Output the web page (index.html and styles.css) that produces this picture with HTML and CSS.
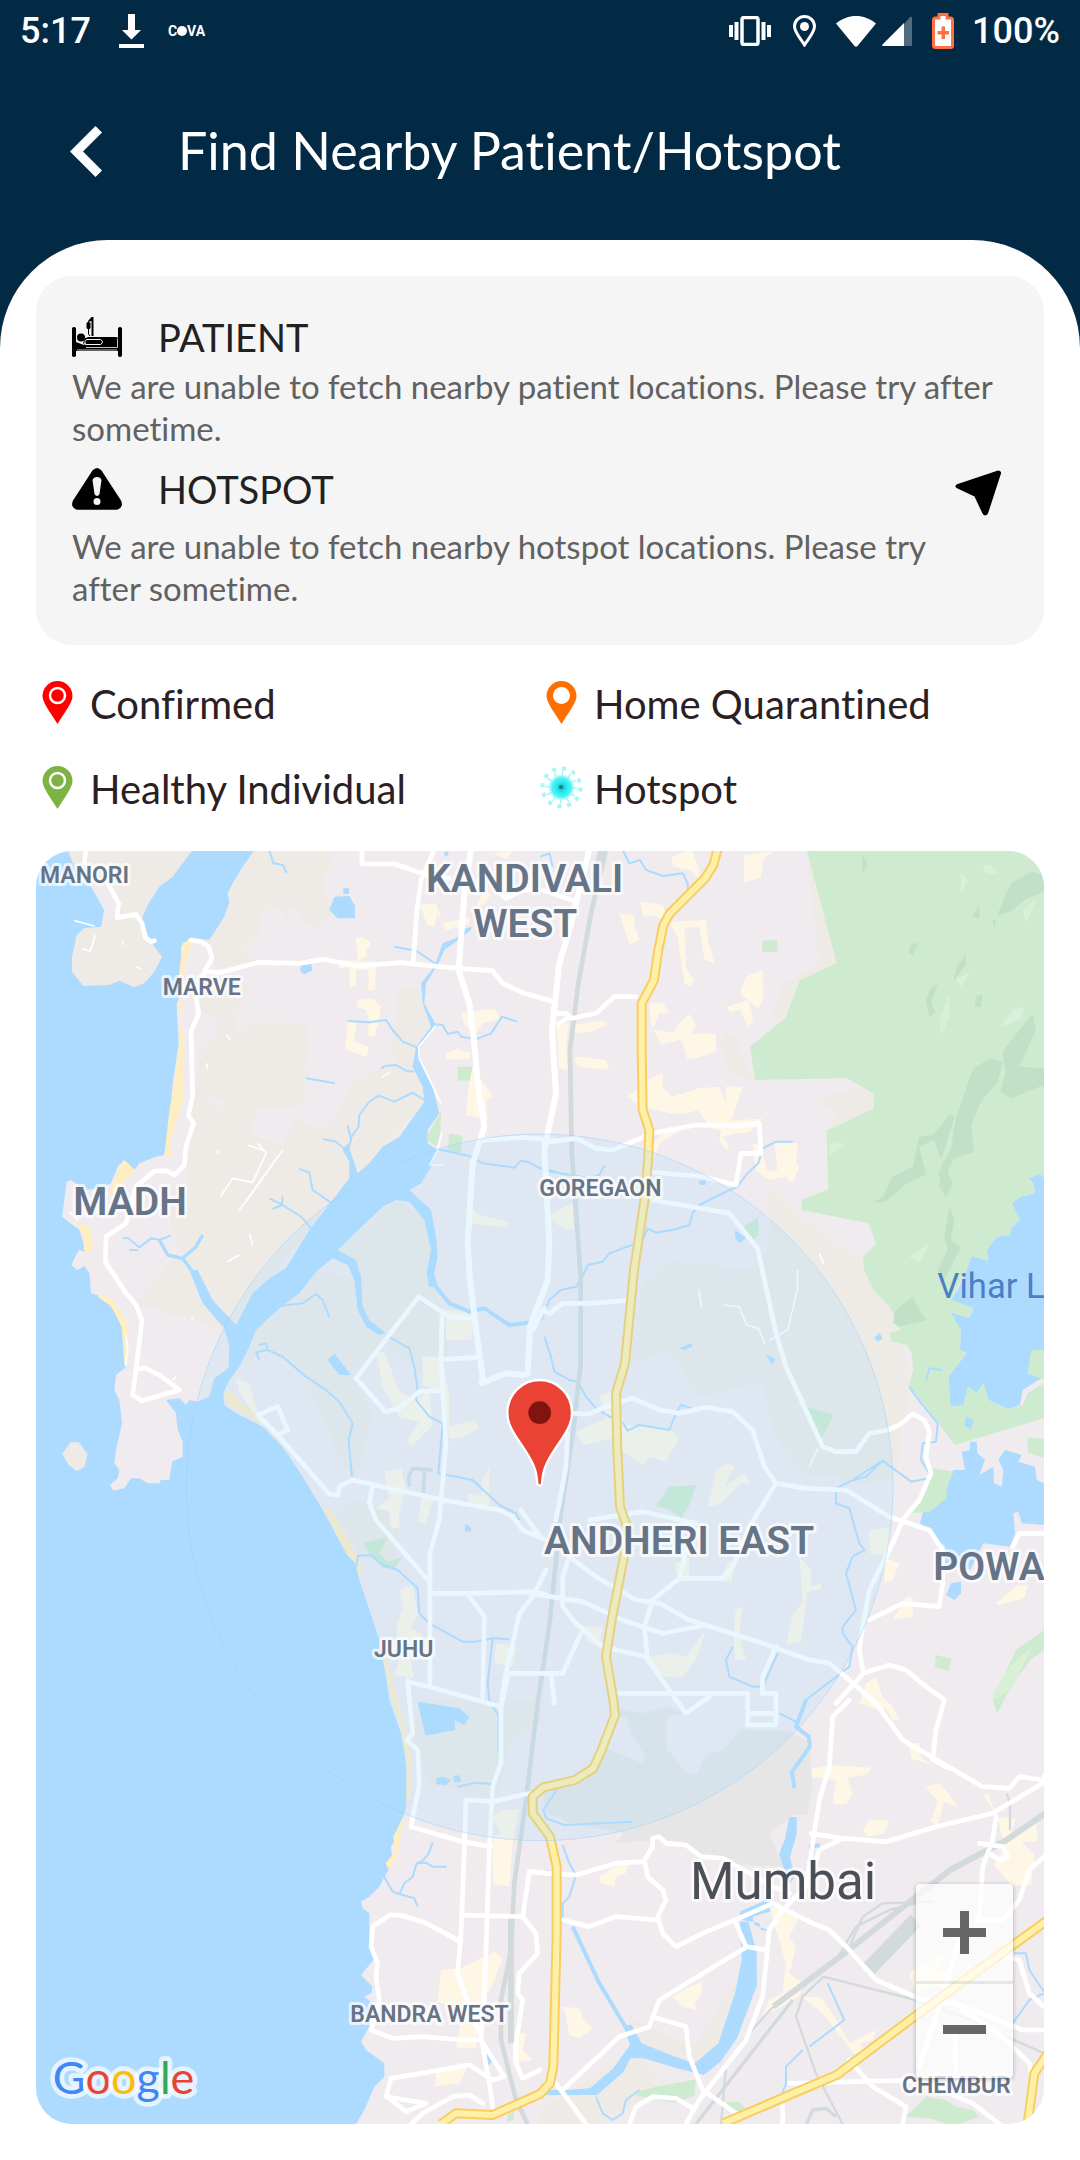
FILE: index.html
```html
<!DOCTYPE html>
<html lang="en">
<head>
<meta charset="utf-8">
<meta name="viewport" content="width=device-width, initial-scale=1">
<title>Find Nearby Patient/Hotspot</title>
<link rel="stylesheet" href="styles.css">
</head>
<body>
<header class="top">
  <div class="status">
    <span class="status-text">5:17</span>
    <svg class="ic-download" viewBox="0 0 25 34" width="25" height="34" fill="#fff" aria-hidden="true"><path d="M9 0h7v16h6l-9.500 9.500L3 16h6zM0 30h25v4H0z"/></svg>
    <span class="carrier">C<i class="dot"></i>VA</span>
    <span class="status-right">
      <svg viewBox="0 0 42 30" width="42" height="30" fill="#fff" aria-hidden="true"><path d="M0 9h4v12H0zM5.500 6h4v18h-4zM32.500 6h4v18h-4zM38 9h4v12h-4z"/><rect x="13" y="1.500" width="16" height="27" rx="2" fill="none" stroke="#fff" stroke-width="3.500"/></svg>
      <svg class="ic-place" viewBox="0 0 23 32" width="23" height="32" aria-hidden="true"><path d="M11.500 30C7 23 1.500 17 1.500 11.500a10 10 0 0 1 20 0C21.500 17 16 23 11.500 30z" fill="none" stroke="#fff" stroke-width="3"/><circle cx="11.500" cy="11.500" r="4.500" fill="#fff"/></svg>
      <svg class="ic-wifi" viewBox="0 0 40 31" width="40" height="31" fill="#fff" aria-hidden="true"><path d="M0 7.500C12-2.500 28-2.500 40 7.500L21.500 30q-1.500 1.500-3 0z"/></svg>
      <svg class="ic-signal" viewBox="0 0 30 30" width="30" height="30" aria-hidden="true"><path d="M22 8L28 1q2-1 2 1v28h-8z" fill="#4f6b7e"/><path d="M22 7v23H1q-2-.500 0-2z" fill="#fff"/></svg>
      <svg class="ic-battery" viewBox="0 0 22 36" width="22" height="36" aria-hidden="true"><path d="M7 1.500h8V5h3.500q2 0 2 2v25.500q0 2-2 2h-15q-2 0-2-2V7q0-2 2-2H7z" fill="#fff" stroke="#ff7043" stroke-width="3"/><path d="M9.500 13.500h3.500v4.500h4v3.500h-4V26H9.500v-4.500h-4V18h4z" fill="#ff7043"/></svg>
      <span class="status-text">100%</span>
    </span>
  </div>
  <div class="bar">
    <button class="back" type="button" aria-label="Back"><svg viewBox="0 0 32 51" width="32" height="51" fill="#fff" aria-hidden="true"><path d="M25.500 0L32 6.500 13 25.500 32 44.500 25.500 51 0 25.500z"/></svg></button>
    <h1 class="title">Find Nearby Patient/Hotspot</h1>
  </div>
</header>
<main class="sheet">
  <section class="card">
    <div class="head">
      <svg viewBox="0 0 50 40" width="50" height="40" aria-hidden="true"><path d="M0 11q2-2 4 0v14l8 3h34V11q2-2 4 0v28q-2 2-4 0v-5H4v5q-2 2-4 0z"/><circle cx="9" cy="20.500" r="4"/><path d="M13 21l4-1h27q2 0 2 2v9H15l-4-5z"/><path d="M13.500 27.500q-2-3 1-5h14q4 2.500 0 5H14l-2-1" fill="none" stroke="#f5f5f5" stroke-width="1"/><path d="M14 30.500h31.500V22M5 33h40" fill="none" stroke="#f5f5f5" stroke-width=".8"/><path d="M19.500 0h2v19h-2V4L16 5v-1z"/><rect x="14.500" y="5" width="4" height="7" rx="1.500"/><path d="M16.500 11v6l1.500 2" fill="none" stroke="#000"/></svg>
      <h2 class="name">PATIENT</h2>
    </div>
    <p class="note">We are unable to fetch nearby patient locations. Please try after sometime.</p>
    <div class="head head-hotspot">
      <svg viewBox="0 0 50 42" width="50" height="42" aria-hidden="true"><path d="M20.500 2.500q4.500-5 9 0L49 32.500q3 7-4 9.200H5q-7-2.200-4-9.200z"/><path d="M20.500 12q1-3 4.500-3t4.500 3l-2 14q-2.500 4-5 0z" fill="#f5f5f5"/><circle cx="25" cy="33.500" r="3.500" fill="#f5f5f5"/></svg>
      <h2 class="name">HOTSPOT</h2>
      <button class="locate" type="button" aria-label="Show my location"><svg viewBox="0 0 46 46" width="46" height="46" aria-hidden="true"><path d="M2 14.200L43 .500q3.500 0 3 3L33 43.500q-3 4-5.500 0L19.500 26.500 1.500 18q-2.500-1.800.5-3.800z"/></svg></button>
    </div>
    <p class="note note-hotspot">We are unable to fetch nearby hotspot locations. Please try after sometime.</p>
  </section>

  <ul class="legend">
    <li><svg viewBox="0 0 43 43" width="43" height="43" aria-hidden="true"><path d="M21.500 0a15 15 0 0 1 15 15C36.500 22 28 32 21.500 43 15 32 6.500 22 6.500 15a15 15 0 0 1 15-15z" fill="#f00"/><circle cx="21.500" cy="14.500" r="7.500" fill="none" stroke="#fff" stroke-width="2.500"/></svg>Confirmed</li>
    <li><svg viewBox="0 0 43 43" width="43" height="43" aria-hidden="true"><path d="M21.500 0a15 15 0 0 1 15 15C36.500 22 28 32 21.500 43 15 32 6.500 22 6.500 15a15 15 0 0 1 15-15z" fill="#ff6f00"/><circle cx="21.500" cy="14.500" r="8.500" fill="#fff"/></svg>Home Quarantined</li>
    <li><svg viewBox="0 0 43 43" width="43" height="43" aria-hidden="true"><path d="M21.500 0a15 15 0 0 1 15 15C36.500 22 28 32 21.500 43 15 32 6.500 22 6.500 15a15 15 0 0 1 15-15z" fill="#7cb342"/><circle cx="21.500" cy="14.500" r="7.500" fill="none" stroke="#fff" stroke-width="2.500"/></svg>Healthy Individual</li>
    <li><svg viewBox="0 0 43 43" width="43" height="43" aria-hidden="true"><defs><radialGradient id="virus"><stop offset="0" stop-color="#12b5bd"/><stop offset=".4" stop-color="#2ceaf0"/><stop offset=".7" stop-color="#4df3f7"/><stop offset="1" stop-color="#4df3f7" stop-opacity="0"/></radialGradient></defs><circle cx="21.500" cy="21.500" r="19" fill="none" stroke="#a5f6f9" stroke-width="4" stroke-dasharray="4 5.950"/><circle cx="21.500" cy="21.500" r="14" fill="none" stroke="#a5f6f9" stroke-width="4" stroke-dasharray="1.500 5.800"/><circle cx="21.500" cy="21.500" r="13.500" fill="url(#virus)"/><circle cx="21" cy="21" r="2" fill="#0b7c88"/></svg>Hotspot</li>
  </ul>

  <section class="map" aria-label="Map">
    <svg class="canvas" viewBox="0 3 3024 3819" role="img" aria-label="Map of Mumbai around Andheri East">
      <defs>
        <path id="expressways" d="M2044 0L2032 45 2007 85 1902 190 1882 225 1867 300 1854 390 1817 460V600L1820 780 1840 840 1837 920 1827 1040 1794 1260 1767 1540 1740 1630 1744 1800 1752 1970 1777 2040 1762 2130 1727 2310 1710 2420 1732 2550 1737 2595 1697 2700 1672 2755 1617 2790 1522 2812 1490 2840V2890L1542 2960 1562 3050V3250L1552 3650 1542 3700 1512 3732 1460 3755 1370 3795 1260 3790 1215 3822M3042 3205L2642 3495 2402 3675 2272 3730 2062 3820M3042 3600L2995 3670 2975 3822"/>
      </defs>
      <rect width="3024" height="3822" fill="#f0ebef"/>
      <!-- undeveloped land -->
      <g fill="#eeebe6">
        <path d="M655 0H870L895 50 860 70 870 140 900 160 880 200 840 235 800 220 780 170 760 180V220L720 170 670 190 665 260 620 300 660 330 540 360 510 260 570 180 590 60zM620 395L640 410 600 500 600 555 640 515 810 520 815 640 790 650 820 670 795 770 660 775 650 850 740 890 780 800 860 840 900 800 960 680 1080 640 1060 600 1090 410 1150 420 1190 530 1140 640 1165 760 1000 940 940 980 700 1290 560 1440 300 1360 430 1200 400 1100 450 1000 470 720 570 790 560 750 480 740 490 600 540 560 545 500 490 490 500 430z"/>
        <path d="M905 1200L1080 1050 1190 1120 1200 1300 1240 1500 1210 1620 1060 1500 960 1270zM990 1290L1060 1460 960 1600 1010 1700 960 1900 900 1800 800 1560 690 1500 620 1550 660 1440 740 1370 840 1260zM900 1990L960 1950 1090 1990 1080 2150 970 2120z"/>
        <path d="M2312 0L2402 340 2290 400 2240 500 2200 520 2240 400 2350 340zM2060 540L2100 560 2120 620 2140 660 2160 700 2080 660 2055 600zM2330 750L2510 700 2516 770 2372 840 2400 790zM2200 1000L2300 1100 2400 1180 2480 1230 2540 1330 2600 1470 2630 1600 2600 1720 2580 1890 2480 1900 2400 1880 2300 1870 2210 1750 2180 1600 1990 1640 1900 1500 1780 1540 1820 1300 1900 1230 2140 1260 2200 1200z"/>
        <path d="M1150 2550H1512V2620L1420 2680 1380 2850 1180 2800 1130 2680zM2140 3330L2160 3400 2080 3600 1960 3680 1800 3600 1780 3500 1900 3560 1980 3580zM1512 3780L1640 3700 1790 3600 1900 3700 1800 3760 1700 3822H1512z"/>
      </g>
      <!-- sea, creeks and lakes -->
      <g fill="#addbff">
        <path d="M0 0H655L620 50 590 100 575 130 580 155 565 200 520 270 490 268 460 265 435 290 440 360 430 440 422 470 428 580 410 700 400 830 385 915 360 920 310 940 295 960 265 930 245 950 225 1000 190 1015 150 1020 105 990 92 995 85 1050 78 1100 130 1140 150 1205 128 1200 106 1245 125 1260 145 1248 160 1270 165 1330 200 1340 240 1390 265 1440 272 1550 240 1575 235 1620 250 1650 258 1720 240 1800 235 1840 250 1860 245 1885 222 1905 232 1922 265 1915 285 1885 310 1885 335 1900 370 1900 375 1890 400 1890 408 1835 440 1820 440 1775 424 1735 420 1690 390 1650 430 1645 450 1665 460 1650 485 1655 520 1640 535 1585 578 1555 580 1490 565 1435 500 1360 460 1260 485 1260 530 1350 600 1425 650 1330 700 1285 750 1255 820 1140 885 1055 940 985 940 935 920 900 935 880 965 970 1000 940 1040 890 1090 860 1165 755 1160 710 1130 650 1140 590 1185 530 1160 460 1155 400 1195 350 1220 280 1260 265 1290 235 1310 230 1300 245 1225 300 1205 345 1170 400 1165 460 1200 525 1150 590 1155 640 1190 710 1210 790 1175 840 1175 880 1205 900 1185 950 1155 1000 1120 1020 1185 1080 1200 1160 1205 1220 1190 1290 1200 1310 1180 1310 1172 1270 1185 1200 1165 1110 1120 1055 1080 1050 1040 1070 905 1200 960 1230 975 1280 980 1370 1000 1410 1050 1450 1030 1455 990 1430 965 1380 955 1290 935 1245 890 1225 845 1260 790 1330 735 1370 660 1440 640 1490 610 1550 580 1590 562 1630 565 1665 600 1690 680 1730 740 1790 800 1880 860 1980 920 2090 960 2140 970 2190 1000 2280 1030 2370 1050 2480 1060 2550 1095 2650 1112 2750 1110 2880 1090 2950 1065 2990 1070 3040 1045 3080 1030 3110 1000 3140 975 3155 980 3175 1000 3190 1000 3260 1020 3320 1000 3345 975 3375 1010 3410 1005 3430 985 3440 1010 3460 1000 3530 975 3575 990 3600 1045 3640 1045 3680 1015 3710 985 3780 960 3822H0z"/>
        <path d="M895 140L940 138 957 168V205H905L880 180zM922 115h17v17h-17zM795 345l30-4 5 20-25 12-12-8zM1225 5h12v12h-12zM875 1530l20-20 50 65h-35z"/>
        <path d="M3024 365L3010 410 3024 400zM3024 440L3007 490 3024 498zM2097 1140L2130 1165 2110 1180 2098 1165zM2570 1215l15-5 10 35-10-5zM1988 993l20-4v16h-15zM1930 1495l35-15 5 8-25 13zM2190 1515l28 12-10 18zM2515 1465l15-17 10 17-15 10zM2745 2200l30-5 0 35-20 20-25-15z"/>
        <path d="M3024 985L3012 970 2977 985 2992 1000 2997 1030 2952 1040 2927 1060 2952 1110 2922 1135V1155L2882 1160 2852 1200 2857 1232 2807 1217 2792 1260 2770 1310 2745 1350 2812 1375 2800 1405 2742 1385 2774 1440 2772 1500 2792 1510 2737 1580 2744 1670 2782 1665 2797 1610 2822 1630 2842 1600 2857 1650 2917 1678 2952 1665 2960 1620 3024 1580z"/>
        <path d="M2777 1805L2802 1800V1775H2822L2824 1810 2847 1830 2830 1875 2872 1850 2874 1900 2897 1910 2902 1860 2887 1830 2907 1800 2957 1815 2947 1835 2997 1850 3002 1890 3024 1900V2025L2957 2020 2947 1985 2932 1990 2937 2050 2922 2090 2842 2080 2802 2160 2710 2140 2727 2090 2652 2020 2662 1980 2732 1920 2727 1900 2752 1860 2787 1860z"/>
        <path d="M1145 2555L1270 2575 1300 2600 1285 2625 1255 2610 1258 2640 1168 2657zM1200 2785l20-5 25 10-15 15-28-2zM1250 2780l20-5 5 20-20 2zM1290 2020l5 5 12 10-5 12-17-5zM1345 3615l20-5 8 20-18 20-12-15zM2320 2983l30-3 3 12-35 5z"/>
        <path d="M2260 2900l22 2v50l-20 70 15 60-18 20-30-90 18-45zM2110 3185l80-35 60 20-100 30 5 25 55 20-35-5-5-20-50-10zM2112 3215l25 0 25 90 1 100-60 160-50 70-50 40-80-20-100-30-40 0-20 40-80 70-60 0H1512v-15h80l70-5 70-60 50-70-20-60 25 0 30 55 100 40 60 20 70-60 50-150 20-100z"/>
      </g>
      <g fill="#eeebe6">
        <path d="M95 0H470L410 80 370 110 335 165 318 205 340 270 378 320 355 365 325 400 295 412 250 392 220 405 142 408 108 365V320L122 255 145 235 195 230 205 180 190 140 165 110 130 90z"/>
        <path d="M78 1812l25-35 25 0 27 35-10 40-22 12-25-20z"/>
      </g>
      <path d="M165 110L220 110 248 200 200 210 205 180z" fill="#f0ebef"/>
      <g fill="#ffeec2">
        <path d="M440 280l22-12 6 12-15 45-10 50-15 10zM422 460l12-15 8 110V740l-40 140 8 45-25-10 15-130 20-120 18-160zM265 930l32 30-82 85 35-95zM120 1115l45 20 8 60-18 15-12-10 2-40zM190 1330l40 20 40 60 8 60-5 75-8-5-8-110-30-60-40-28z"/>
        <path d="M865 1980l15-10 85 150 15 40-12 20-10-40-25-25zM1030 2380l30 130 40 140 12 110v110l-15 40-25 50 5 45-28 35 10 20 25-40 15-100 25-90V2700l-30-120-40-140zM565 1625l15-5 130 130 70 90-90-110-120-70z"/>
      </g>
      <!-- parks -->
      <g fill="#ceebcf">
        <path d="M2312 0L2402 340 2292 390 2247 505 2142 590 2157 690 2432 685 2512 730 2514 775 2372 842 2377 1018 2297 1050V1080L2497 1120 2520 1180 2482 1220 2484 1260 2512 1320 2562 1370 2582 1420 2592 1440 2562 1450 2567 1475 2612 1485 2627 1510 2632 1560 2619 1610 2662 1660 2707 1720 2757 1785 3024 1705V1600L2975 1630 2960 1665 2915 1678 2857 1650 2842 1600 2822 1630 2797 1610 2782 1665 2744 1670 2737 1580 2792 1510 2772 1500 2774 1440 2742 1385 2800 1405 2812 1375 2745 1350 2792 1260 2807 1217 2857 1232 2852 1200 2882 1160 2922 1155 2927 1130 2952 1110 2927 1060 2952 1040 2997 1030 2992 1000 2977 985 3012 970 3024 985V0z"/>
        <path d="M2179 272l45-2v36h-45zM1265 650h43v42h-43zM1215 785l-2 60-12 45-25-18v-20zM1240 850l40 8-6 50-40-5zM2122 1130l45-28v50l-20 25zM2310 1670l85 25-40 70zM1900 1910l80-5-20 60-25 38-40-25-35-10zM980 2080l75-20-25 50 25 25 42-12-20 32-35 0-30-30zM2622 1990l65-135 65 10-20 50v30l-50 40zM2975 1762l49 6v56l-49-17zM2700 2415l47 12-10 36-40-12zM2870 2550l70-150 84-60v60l-40 30-60 80-40 80zM3024 1500l-38 0-12 70 50 20z"/>
        <path d="M1790 3730l70-20 120-22-5 50-60 20-110-20zM2070 3755l40 0 20 22-5 20-40-20zM2610 3800l60-60 60 10 30 20 50 10 20 20-60 22h-40l-40-15zM1415 3795l20-10-3 25-18 5z"/>
      </g>
      <path d="M2790 1700l25 10-12 28-18-13z" fill="#addbff"/>
      <!-- hill shading -->
      <g fill="#bcdcc0" opacity=".7">
        <path d="M2925 100l60-35 39 10v50l-50 20-50 40-40 10 25-60zM2625 285l24-8-20 40-12-8zM2790 315v30l-40 50 15-50zM2680 420l25-20-20 60 15 30-20 12-10-50zM2820 440l20-8-5 40-18-2zM2990 490l10 50-50 110 74 5v50l-100 40-30-20 15-60-10-60zM2810 660l50-35 40 10-15 60-50 60-30 70 10 80-60 20-30 60-20-10 40-80 15-90zM2650 890l45-20 20 60 20-60 20-70-15-5-50 60-40 5-20 90-60 30-30 60-30 18 40-5 60-50 60-30zM2720 930l30 70-20 40-20-30zM2740 1070l15 40-10 60 30 20-20 40-30 60-20-30 30-60-10-40zM2580 1380l50-40 20 40 20 30-40 10-40 10-20-10zM2480 15l15 30-15 25zM2810 200l20-35v40zM2870 210l10 0-5 25z"/>
      </g>
      <g fill="#d8f0d8"><path d="M2775 70l20 20-20 40zM2840 45l25 0 25 30-40-5zM2960 180l40-30-20 50-10 20zM2760 390l45-30-30 50zM2930 480l35-10-10 40-60 20zM2710 510l30-80v70l-25 60zM2380 880l45 0-45 40zM2620 1220l60-40-30 60zM2870 2530l60-90 60-50-60 120-50 40z"/></g>
      <!-- dense blocks -->
      <g fill="#fff7e6">
        <path d="M1150 165l50-5 20 60 80-18v20l-70 18-25-50-10 40-20-5zM960 265l20-5 25 20-15 20 5 20-30 10zM910 330l110 5-3 85h-20v-60h-38v50h-18v-60l-30 5zM965 450l45-5 25 25-5 35-15 55-20-5 5-40-10-35-28-10zM935 510l28 0-10 65 45 15-5 30-65-20zM1275 490l40-8 65-4 10 30-50 12-20 30-35-25zM1232 610l30-12 40 10v20h-70zM1315 630l20 60 35 50-20 15 5 55-65-15 10-100zM1340 130l25 0-15 30-30 10zM1370 10l60-8-20 25z"/>
        <path d="M1907 20l60-20 20 50 5 40-30-30-50-10zM2125 15l90-12-30 20-12 60-50 15zM1750 190l45 5 0 30 15 45-30 15zM1812 155l70 10 10 50-40-20-30 5zM1900 215l110-5 5 60 20 70-30-10-15-100-45 5 5 120 25 35-10 20-20-10-20-140zM2130 380l50-20 2 90-15 25-25-20-30-25zM2072 470l65-20 15 60-15 20-25-50-30 5zM1840 460l40-2 20 30-30 0-20 50 60 10 20-30 30-25 20 30-15 30 75 0v50l-55 20-30 5-20-60-60 15-30-60zM1620 525l80-15 15 15-50 20-50 5zM1560 520h40l-10 60 5 80-25-5zM1620 620l90 10 10 30-85-10-20-15zM1850 680l30-10 0 45 30 25 80-25 60-5 20 50 0-50 50 0-20 60-15 40-10 35-50-10-40-55-30 10-50 0-90-20-40-30zM2060 815l120-10-40 40-40 5-40 10 20 30-10 10-20-30zM1900 830l50 0-80 50-15 45-20 10 20-60zM2150 880l25 10 20 75 30-5-10-80 70 0-5 60 10 10-20 50-20-20-50 10-40-30z"/>
        <path d="M1310 1075l20 20 70 15 20 10-10 12-110-12zM1550 1090l60-30 5 80-35-5-40-30zM1020 1510l25-5 45 120 50 25 40-25 10 100-60 60-20-8 40-60-60-15-50-90zM1160 1520l60 0 20 120 0 90 80-20 5 25-50 30-35 0-20-140-60-20zM1230 1380l90 5-15 85-75 0zM600 1585l40 15 25 90-15-5-40-60zM1045 1865l50-10 15 60-20 70 0 50-25 0-5-50-40-10 40-30zM1340 1890l20-40v130l-60-10-5-40 40 10zM1160 1920l30 30-20 70-25-5zM1090 2220l40-15 15 90-20 40 35 20-35 80 10 50-60-10 20-60-15-80 20-60zM1380 2380l60 10-10 60-55-10z"/>
        <path d="M1620 1745l90-40-20-70 40-10 20 60 20 40 130 10 30 30-40 70-50-15-20 25-60-40-30-40-90 20zM2040 1860l35-20 20 10-30 60 60-40 20 30-30 0-60 60-40 10zM1920 2140l40-20 0 60-40-10zM2080 2130l20 10-15 60-30-10zM2290 2120l35 40 0 50 30-10v15l-40 10-20 150-45 10 20-90 30-40zM2095 2280l25-10-10 90 20 70-35 0zM1840 2420l70-10 40 10 60-80-30 90-40 50-60 0-50-40zM1640 2330l60 0-10 60-40-20zM2500 2040l60-10v90l-60-10zM2550 2125l40 15-20 50-25 10zM2610 2240l20 0v60l-60 10zM2880 2260l60-50 35-5-10 40-80 20zM2490 2500l30-20 20 60 30 30-40 10-60-20z"/>
        <path d="M2310 2760l80-15 115 8-10 20-60 10 15 50-20 30-40 0 10-70-40-10-50 0zM2480 2940l20-30 60 0-15 40-50 10zM2670 2810l40-10 35 40 20 30-40-15-20 70-20-10 20-60zM2620 2680l30 0 5 40 30 25-60-20zM2540 2560l30 10 20 40-20 0zM2840 2830l20 5 20 70 60 0-20 60 80-50 5 60-50 0 40 40-10 90-60 0-50-60 30-60-20-80zM1690 3080l70-45 20-5-10 40-30 10-5 30-40-10zM1910 3440l50-30 40-15-5 40-20 25 10 20-45-10zM1580 3470l50 5 10 30 30 30-40 30-30-10-10-60zM2200 3170l40 0 50 30-30 60 20 30-20 80 40 30-10 40-90 50-20 10 20-50 40-20 10-90zM2300 3440l50 0 40 50 50 90 80-40-10 30-40 10 30 40-30 10-70-90-50-60-30-20zM2620 3370l100-60-10 50 40 20-20 30-60 0-30 20z"/>
        <path d="M1400 2880l50 0-20 100-10 130-50-10 0-140 25-10-30-50zM1215 3360l60-5 100-50 25 20-30 80-40 60-10 130-60 0 20-110-75-30zM1430 3550l40 0-10 50 30 30-60 10zM1200 3670l70-30 30 0-30 60-75 10z"/>
      </g>
      <!-- airport -->
      <path d="M1752 2580L1820 2590 1890 2570 2132 2640 2262 2642 2320 2680 2330 2815 2312 2895 2272 2895 2202 2950 2240 3050 2110 3045 2010 3025 1940 2975 1880 2970 1742 2978 1762 2950 1602 2920 1530 2890 1520 2820 1650 2790 1700 2700z" fill="#e6e6e6"/>
      <path d="M1890 2600l110-20 120 50-60 70-50 15-30 60-30-10-60-70zM1690 2610l80-10 20 60 40 60-10 20-100-40-40-20z" fill="#f0ebef"/>
      <!-- streams -->
      <g fill="none" stroke="#addbff" stroke-width="6" stroke-linejoin="round">
        <path d="M700 0L712 40 740 45 752 68M1075 290L1140 302 1200 342M935 513L1000 517 1050 510 1070 540 1100 575 1142 592M1190 522L1220 525 1235 552 1265 545 1275 560 1320 568 1365 550 1398 500 1443 515M1035 655L1050 647 1080 645 1110 662 1135 665M810 685L897 700M1165 750L1130 728 1110 738 1075 755 1028 737 1000 755 970 795 968 830 943 865M862 867L900 875 935 905 945 870 935 825M790 957L820 968 830 1020 885 1058M700 1045L735 1062 795 1100 828 1137M740 1040L738 1065 710 1077M1205 898L1300 918 1340 940 1435 953 1455 932 1480 937 1512 955 1560 965M260 1165L275 1163 310 1192 345 1165 370 1170 405 1157M280 1200L305 1200"/>
        <path d="M370 1170L395 1215 440 1225 480 1190 500 1155M440 1225L480 1280" stroke-width="10"/>
        <path d="M735 1368L755 1365 800 1360 840 1332 860 1350 880 1402M668 1485L690 1480 695 1500 660 1507 670 1530M695 1500L740 1520 810 1580 870 1620 910 1655 950 1720 938 1770 948 1880M1050 1455L1120 1495 1135 1550 1145 1620 1140 1650 1180 1700 1220 1720 1207 1870 1310 1890 1390 1965 1440 1990 1450 2010M962 2150L965 2118 1005 2115 1040 2145 1085 2160 1145 2215 1150 2290 1180 2320 1280 2375 1320 2375 1370 2365 1420 2368M1370 2365L1355 2500 1360 2550 1388 2600V2710M1265 2810L1320 2798 1365 2802M1190 2977L1178 3010 1160 3032 1142 3040 1130 3080 1105 3100 1090 3132 1070 3125 1045 3080 1008 3042M1142 3040L1170 3038 1190 3050 1232 3050M1090 3132L1135 3145 1145 3170"/>
        <path d="M1512 20L1540 10 1550 50M1760 0L1780 40 1812 30 1830 60 1882 78 1940 70 1955 100 1955 120M1707 945L1690 975 1660 985 1530 962M2270 875H2220L2180 895 2167 940 2130 975 2105 1010 2080 1020 1990 1065 1970 1090 1960 1125 1910 1140 1860 1148 1835 1135 1820 1170 1800 1180 1720 1210 1700 1235 1655 1245 1640 1280 1620 1310 1575 1320 1540 1350 1520 1400M1525 1460L1545 1520 1555 1565 1600 1590 1625 1595 1650 1640 1680 1675 1730 1705M1760 1715L1775 1742 1810 1725 1900 1740 1920 1690 1935 1665 1975 1678M2450 1890L2540 1832 2625 1895 2680 1885M2540 1832L2490 1880 2440 1895 2400 1915V1960L2440 1975 2470 2080 2485 2100 2450 2120 2430 2170 2460 2280 2420 2330 2420 2350 2450 2390 2440 2450 2310 2550M2090 2390L2070 2430 2080 2480 2150 2510 2180 2510 2225 2410M2720 1560L2680 1555 2670 1590M2620 1610L2640 1640 2705 1720 2700 1775 2660 1780 2655 1830 2680 1870V1900M1562 2820L1522 2880 1530 2905 1585 2925 1790 2915M1580 2985L1600 3040 1620 3075 1600 3140 1580 3160 1580 3220M2375 3400L2425 3510 2320 3590M2300 3600L2250 3650 2250 3700 2235 3740M1680 3740L1700 3790 1730 3810 1760 3790 1770 3750 1810 3720M2935 3310L2970 3310 2980 3360 3024 3425M3024 3430L2980 3450 2930 3520M2230 2590L2280 2615"/>
        <path d="M1180 1250L1200 1310 1240 1360 1300 1385 1345 1375 1420 1425 1500 1415 1520 1400M1610 3230L1690 3400 1780 3550M2310 2550L2280 2630 2318 2660 2322 2690 2268 2765 2275 2815" stroke-width="12"/>
      </g>
      <!-- railways -->
      <g fill="none" stroke="#d3dadc" stroke-width="14" stroke-linejoin="round">
        <path d="M1710 0L1665 190 1627 400 1602 600 1607 900 1627 1180 1634 1280 1634 1540 1612 1740 1572 2010 1542 2310 1505 2560 1470 2850 1435 3100 1425 3300 1395 3450V3570L1440 3750 1475 3822"/>
        <path d="M1695 0L1675 90M1425 3200V3580M3042 2880L2912 2970 2742 3060 2412 3320 2212 3470" stroke-width="18"/>
        <path d="M2212 3470L2130 3560 2070 3650 2055 3822M2362 3380L2300 3440 2280 3500 2340 3670 2420 3822M2362 3380L2640 3450 2780 3500 3024 3610M2912 2830L2922 2860V2940M2440 3290L2480 3200 2540 3160 2690 3155M2400 3330L2460 3230 2560 3180 2640 3160" stroke-width="7"/>
        <path d="M2500 3355L2640 3210" stroke-width="46"/>
        <path d="M2270 3450L1980 3822M2312 3822L2330 3780 2370 3775 2400 3800" stroke-width="10"/>
        <path d="M1120 1910L1118 1880 1130 1855 1190 1860M1165 1865L1162 1930" stroke-width="10"/>
      </g>
      <!-- minor tracks -->
      <path d="M115 212L175 228M178 255L163 303 138 297M300 350L313 356M260 270V285M572 555L583 570M513 640V656M545 900V912M553 1040L590 985 650 997 690 910 665 880M740 900L630 1055M725 920L610 1080M635 885L680 900M575 1235L610 1215M640 1150L650 1185M1035 683L1063 665M1198 528L1148 590 1150 625 1215 760M1218 845L1205 900 1182 945H1220M100 1085L128 1112M410 1590L420 1580M465 1405H475M270 1455L275 1500 268 1550M1988 1318L1997 1375M2062 1365L2110 1370 2132 1425 2168 1435 2188 1485M2284 1260V1320L2255 1440 2200 1470M2345 1795L2320 1850M2350 1210L2362 1240" fill="none" stroke="#fff" stroke-width="5"/>
      <!-- roads -->
      <g fill="none" stroke="#fff" stroke-width="14" stroke-linejoin="round" stroke-linecap="round">
        <path d="M150 0L145 40M215 100L248 160 243 203 300 193 318 220 328 262 345 275 355 272M465 270L495 275 518 290 528 325 505 365 480 440 488 490 465 545 470 740 457 795 473 820 450 890 445 945 415 975 390 962 355 963 300 1010 270 1120 210 1160 208 1235 270 1330 300 1365 318 1410 300 1560 290 1635 318 1652 430 1620 370 1575 325 1553 300 1560M515 365L550 368 670 337 790 340 865 328 960 348 1095 338 1260 355 1370 362 1400 400 1460 428 1555 455M978 0V42L1075 42 1165 72 1240 85M1195 0L1155 90 1143 180 1132 330M1550 870L1460 862 1335 872"/>
        <path d="M1305 0L1285 130 1268 360 1300 460 1315 580 1325 700 1345 830 1310 940 1295 1180 1302 1290 1322 1450 1340 1580 1337 1600 1410 1570 1460 1575 1475 1570 1482 1430 1535 1290 1540 1180 1525 900 1560 730 1548 540 1570 340 1600 240 1660 0" stroke-width="18"/>
        <path d="M1380 120L1410 145 1460 120 1520 120 1620 155M1560 490L1590 490 1610 505 1680 490 1735 440 1800 440M1570 520L1600 500M1525 878L1620 865 1680 895 1730 900 1850 850 1980 825 2110 828 2170 820 2175 910H2115L2100 1005 2000 980 1830 965M1850 1050L2080 1090 2165 1195 2185 1290 2220 1450 2250 1550 2360 1790 2400 1805 2460 1805 2500 1750 2555 1740 2590 1725 2630 1692 2665 1710 2680 1745 2670 1820 2685 1870 2650 1950 2600 2010 2570 2080 2500 2220 2480 2330 2470 2400 2482 2470M1512 1380L1540 1390 1580 1360 1660 1360 1770 1352M1610 1690L1660 1692 1720 1665 1790 1645 1870 1680 1930 1690 2010 1672 2090 1685 2150 1740 2185 1850 2220 1900 2310 1915 2430 1920 2560 2000 2680 2040 2720 2100 2720 2200 2710 2270 2600 2260 2500 2310M2220 1900L2140 2030 2090 2150 2060 2185 1930 2185 1850 2250 1825 2330 1835 2430M1595 1750L1590 1850 1560 2010M1660 2010L1820 1985 1980 2020M1600 2120L1680 2180 1800 2250 1870 2260 1960 2310 2180 2380 2320 2430 2380 2440 2440 2490 2520 2560 2600 2670 2720 2740 2840 2810 2920 2815 2950 2780 3024 2790M3024 2050L2950 2050 2930 2090"/>
        <path d="M1480 2230L1640 2255 1760 2310 1880 2350 2010 2325M1600 2120L1580 2180 1580 2270 1620 2320 1700 2390 1830 2420 1920 2550M1635 2350L1580 2470H1410M1545 2470L1555 2560M1950 2100L1930 2190M2220 2390L2180 2480 2178 2530H2220V2625H2135V2530H1750M2135 2590H2220M1920 2550L1950 2590 2020 2540M1415 2480L1395 2570M2482 2470L2560 2445 2610 2460 2670 2510 2720 2545M2482 2470L2400 2560M1455 1980L1512 2060"/>
        <path d="M960 1585L1148 1340 1240 1400 1312 1405M960 1585L1048 1685 1090 1675 1150 1625 1218 1622M1218 1400L1215 1540 1230 1780 1210 2010 1182 2110V2500M1215 1528L1335 1522M1525 1375L1490 1440M665 1695L725 1670 755 1740 725 1755zM725 1755L880 1932 905 1935 910 1910 950 1890 1210 1948 1390 1980 1430 2000 1460 2040 1530 2070M1010 1905L1000 1960 1020 2010 1180 2195M1190 2230H1300L1500 2225 1530 2235M1300 2240L1345 2300 1340 2540M1530 2160L1490 2240 1450 2290 1410 2470 1395 2560V2740L1370 2810 1360 3000 1345 3450 1335 3560M1115 2490L1130 2650 1112 2670 1145 2700 1150 2800 1125 2930 1280 2975 1365 2990M1115 2495L1180 2510 1395 2570M1480 2830L1370 2855 1290 2850 1285 3000 1275 3250 1265 3370 1300 3470 1335 3560M1280 3195L1460 3200 1500 3250 1505 3310 1450 3370 1445 3430 1460 3450 1440 3580V3640L1460 3685 1512 3660M1460 3200L1480 3065 1530 3070M1275 3275L1160 3215 1090 3195 1060 3195 1010 3230 1005 3290 1025 3340 1020 3380 1030 3450 1005 3540 1070 3565 1160 3560 1280 3570 1335 3570M1335 3570L1405 3680 1370 3690 1300 3645 1065 3685 1050 3740 1110 3750 1170 3760 1110 3785 1060 3745M1335 3560L1360 3700 1370 3770M1125 3822L1160 3790 1250 3740 1300 3735 1340 3760"/>
        <path d="M1530 3070L1620 3075 1740 3040 1820 3035M1850 2965L1870 2960 1890 2980 1950 2985 1995 3020 2060 3025 2140 3070 2210 3110 2260 3130M1850 2965L1850 2990 1825 3030 1835 3080 1880 3120 1890 3150 1865 3200 1880 3250 1920 3290 2000 3250 2120 3200 2210 3160 2330 3220 2380 3240 2440 3300 2520 3390 2660 3450 2760 3460 2960 3540 3024 3540M1580 3210L1660 3230 1740 3200 1865 3210M2100 3220L2130 3290 2190 3300M2125 3295L1870 3450 1840 3530 1750 3560 1580 3720M1850 3500L1950 3530 1960 3620 2000 3720 2100 3790M2440 2550L2390 2600 2380 2750 2350 2850 2310 3110 2240 3180 2200 3240 2180 3440 2130 3570 1990 3750 1950 3822M2325 2950L2420 2965 2550 2975 2700 2930 2870 2890 3020 2800 3024 2780M2325 3080L2350 3000 2420 2965M2725 2550L2700 2640 2690 2730 2740 2755M2880 2900L2870 2970 2840 3050 2830 3200 2820 3210 2900 3210 2950 3150 2980 3060 3024 3020M2830 2980L2900 2990 2915 3020 2890 3030 2860 3010M1560 3700L1650 3822M1780 3822L1800 3770 1850 3740 1920 3745 1970 3775M2260 3700L2650 3690 2810 3760 2890 3822M2440 3630L2510 3710 2610 3770 2600 3822M2650 3650L2700 3500 2770 3270M2757 3550L2760 3700M2780 3480L2900 3560 2980 3640 2990 3700M2880 3310L2950 3330 2980 3430 3024 3470M2240 3822V3770"/>
      </g>
      <g fill="none" stroke-linejoin="round">
        <use href="#expressways" stroke="#f9cd5f" stroke-width="30"/>
        <use href="#expressways" stroke="#fff0a8" stroke-width="18"/>
      </g>
      <!-- search radius -->
      <circle cx="1511" cy="1912" r="1060" fill="#a4daff" fill-opacity=".22" stroke="#9ccfff" stroke-opacity=".5" stroke-width="3"/>
      <g class="place">
        <text x="12" y="98">MANORI</text>
        <text x="380" y="434">MARVE</text>
        <text x="1510" y="1037">GOREGAON</text>
        <text x="1014" y="2422">JUHU</text>
        <text x="943" y="3515">BANDRA WEST</text>
        <text x="2598" y="3728">CHEMBUR</text>
      </g>
      <g class="district">
        <text x="1170" y="127">KANDIVALI</text>
        <text x="1312" y="262">WEST</text>
        <text x="112" y="1095">MADH</text>
        <text x="1524" y="2112">ANDHERI EAST</text>
        <text x="2692" y="2190">POWA</text>
      </g>
      <text class="lake" x="2704" y="1344">Vihar L</text>
      <text class="city" x="1962" y="3148">Mumbai</text>
      <g>
        <path d="M1511 1590C1563 1590 1608 1632 1608 1688C1608 1730 1580 1762 1558 1796C1528 1842 1520 1862 1518 1902Q1511 1912 1504 1902C1502 1862 1494 1842 1464 1796C1442 1762 1414 1730 1414 1688C1414 1632 1459 1590 1511 1590z" fill="#ea4335" stroke="#fff" stroke-width="7"/>
        <circle cx="1511" cy="1688" r="34" fill="#811411"/>
      </g>
      <text class="logo" x="50" y="3733"><tspan fill="#4285f4">G</tspan><tspan fill="#ea4335">o</tspan><tspan fill="#fbbc05">o</tspan><tspan fill="#4285f4">g</tspan><tspan fill="#34a853">l</tspan><tspan fill="#ea4335">e</tspan></text>
    </svg>
    <div class="zoom">
      <button type="button" aria-label="Zoom in"><svg viewBox="0 0 43 43" width="43" height="43" fill="#666" aria-hidden="true"><path d="M17 0h9v17h17v9H26v17h-9V26H0v-9h17z"/></svg></button>
      <button type="button" aria-label="Zoom out"><svg viewBox="0 0 43 43" width="43" height="43" fill="#666" aria-hidden="true"><path d="M0 17h43v9H0z"/></svg></button>
    </div>
  </section>
</main>
</body>
</html>
```
FILE: styles.css
```css
* {
  box-sizing: border-box;
}

body {
  margin: 0;
  background: #fff;
  color: #212121;
  font-family: "Lato", "Open Sans", sans-serif;
  font-variant-ligatures: no-common-ligatures;
}

svg {
  display: block;
  flex: none;
}

button {
  padding: 0;
  border: 0;
  background: none;
  cursor: pointer;
}

.top {
  background: #022a45;
  color: #fff;
  padding-bottom: 108px;
}

.status {
  display: flex;
  align-items: center;
  height: 62px;
  padding: 0 20px;
  font-family: "Roboto", sans-serif;
}

.status-text {
  font-size: 36px;
  line-height: 42px;
  font-weight: 500;
}

.ic-download {
  margin-left: 28px;
}

.carrier {
  display: flex;
  align-items: center;
  margin-left: 24px;
  font-size: 14px;
  line-height: 16px;
  font-weight: 700;
}

.dot {
  width: 10px;
  height: 10px;
  border-radius: 50%;
  background: #fff;
}

.status-right {
  display: flex;
  align-items: center;
  margin-left: auto;
}

.ic-place {
  margin-left: 22px;
}

.ic-wifi {
  margin-left: 20px;
}

.ic-signal {
  margin-left: 6px;
}

.ic-battery {
  margin: 0 18px 0 20px;
}

.bar {
  display: flex;
  align-items: center;
  height: 178px;
  padding: 0 70px;
}

.back {
  margin-right: 76px;
}

.title {
  margin: 0;
  padding-bottom: 2px;
  font-size: 52px;
  line-height: 64px;
  font-weight: 400;
}

.sheet {
  position: relative;
  margin-top: -108px;
  padding: 36px;
  border-radius: 108px 108px 0 0;
  background: #fff;
}

.card {
  padding: 36px;
  border-radius: 36px;
  background: #f5f5f5;
}

.head {
  display: flex;
  align-items: center;
  gap: 36px;
  height: 53px;
  padding-bottom: 4px;
}

.head-hotspot {
  height: 76px;
  padding: 4px 0 0;
}

.name {
  margin: 0;
  font-size: 38px;
  line-height: 48px;
  font-weight: 400;
}

.locate {
  margin-left: auto;
  padding: 8px 7px 0 0;
}

.note {
  margin: 0;
  color: #616161;
  font-size: 33px;
  line-height: 42px;
}

.note-hotspot {
  padding-right: 46px;
}

.legend {
  display: grid;
  grid-template-columns: 1fr 1fr;
  gap: 39px 0;
  margin: 36px 0 39px;
  padding: 0;
  list-style: none;
  color: #2b2022;
  font-size: 40px;
  line-height: 46px;
}

.legend li {
  display: flex;
  align-items: flex-start;
  gap: 11px;
}

.map {
  position: relative;
  overflow: hidden;
  border-radius: 36px;
}

.canvas {
  width: 100%;
  height: auto;
  font-family: "Roboto", sans-serif;
}

.canvas text {
  paint-order: stroke;
  stroke: #fff;
  stroke-opacity: 0.7;
  stroke-width: 18px;
  stroke-linejoin: round;
}

.place {
  fill: #667487;
  font-size: 69px;
  font-weight: 600;
}

.district {
  fill: #667487;
  font-size: 117px;
  font-weight: 600;
}

.canvas .lake {
  fill: #4d7fc4;
  stroke: none;
  font-size: 104px;
}

.city {
  fill: #4b5058;
  font-size: 153px;
}

.canvas .logo {
  font-family: "Lato", sans-serif;
  font-size: 135px;
  stroke-width: 28px;
}

.zoom {
  position: absolute;
  right: 31px;
  bottom: 46px;
  width: 97px;
  border-radius: 4px;
  background: rgba(255, 255, 255, 0.72);
  box-shadow: 0 1px 4px rgba(0, 0, 0, 0.3);
}

.zoom button {
  display: grid;
  place-items: center;
  width: 100%;
  height: 97px;
}

.zoom button + button {
  box-shadow: inset 0 3px rgba(0, 0, 0, 0.08);
}
```
